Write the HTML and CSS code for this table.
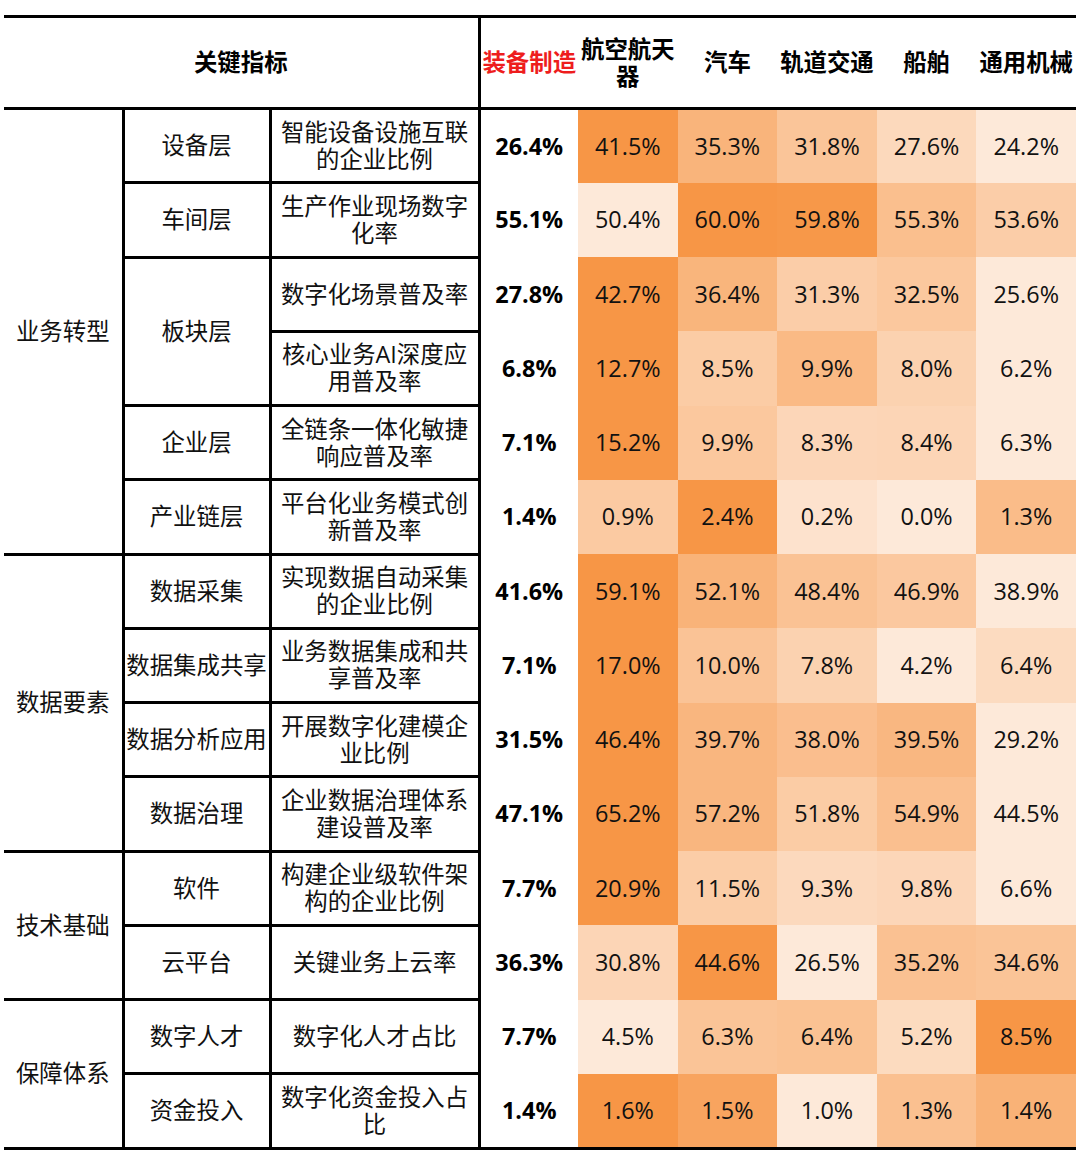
FILE: index.html
```html
<!DOCTYPE html>
<html lang="zh-CN">
<head>
<meta charset="utf-8">
<title>关键指标</title>
<link rel="stylesheet" href="styles.css">
</head>
<body>
<table class="kpi">
  <colgroup>
    <col class="c-grp"><col class="c-sub"><col class="c-ind"><col class="c-tot">
    <col class="c-heat"><col class="c-heat"><col class="c-heat"><col class="c-heat"><col class="c-heat">
  </colgroup>
  <thead>
    <tr class="head">
      <th colspan="3" class="h-main">关键指标</th>
      <th class="h-red">装备制造</th>
      <th>航空航天<br>器</th>
      <th>汽车</th>
      <th>轨道交通</th>
      <th>船舶</th>
      <th>通用机械</th>
    </tr>
  </thead>
  <tbody>
    <tr>
      <td rowspan="6" class="grp">业务转型</td>
      <td class="sub">设备层</td>
      <td class="ind">智能设备设施互联<br>的企业比例</td>
      <td class="tot">26.4%</td>
      <td class="heat" style="background:rgb(247,150,70)">41.5%</td>
      <td class="heat" style="background:rgb(249,180,123)">35.3%</td>
      <td class="heat" style="background:rgb(250,197,153)">31.8%</td>
      <td class="heat" style="background:rgb(252,217,188)">27.6%</td>
      <td class="heat" style="background:rgb(253,233,217)">24.2%</td>
    </tr>
    <tr>
      <td class="sub">车间层</td>
      <td class="ind">生产作业现场数字<br>化率</td>
      <td class="tot">55.1%</td>
      <td class="heat" style="background:rgb(253,233,217)">50.4%</td>
      <td class="heat" style="background:rgb(247,150,70)">60.0%</td>
      <td class="heat" style="background:rgb(247,152,73)">59.8%</td>
      <td class="heat" style="background:rgb(250,191,142)">55.3%</td>
      <td class="heat" style="background:rgb(251,205,168)">53.6%</td>
    </tr>
    <tr>
      <td rowspan="2" class="sub">板块层</td>
      <td class="ind">数字化场景普及率</td>
      <td class="tot">27.8%</td>
      <td class="heat" style="background:rgb(247,150,70)">42.7%</td>
      <td class="heat" style="background:rgb(249,181,124)">36.4%</td>
      <td class="heat" style="background:rgb(251,205,168)">31.3%</td>
      <td class="heat" style="background:rgb(251,200,158)">32.5%</td>
      <td class="heat" style="background:rgb(253,233,217)">25.6%</td>
    </tr>
    <tr>
      <td class="ind">核心业务AI深度应<br>用普及率</td>
      <td class="tot">6.8%</td>
      <td class="heat" style="background:rgb(247,150,70)">12.7%</td>
      <td class="heat" style="background:rgb(251,204,165)">8.5%</td>
      <td class="heat" style="background:rgb(250,186,133)">9.9%</td>
      <td class="heat" style="background:rgb(251,210,176)">8.0%</td>
      <td class="heat" style="background:rgb(253,233,217)">6.2%</td>
    </tr>
    <tr>
      <td class="sub">企业层</td>
      <td class="ind">全链条一体化敏捷<br>响应普及率</td>
      <td class="tot">7.1%</td>
      <td class="heat" style="background:rgb(247,150,70)">15.2%</td>
      <td class="heat" style="background:rgb(251,200,158)">9.9%</td>
      <td class="heat" style="background:rgb(252,214,184)">8.3%</td>
      <td class="heat" style="background:rgb(252,213,182)">8.4%</td>
      <td class="heat" style="background:rgb(253,233,217)">6.3%</td>
    </tr>
    <tr class="grp-end">
      <td class="sub">产业链层</td>
      <td class="ind">平台化业务模式创<br>新普及率</td>
      <td class="tot">1.4%</td>
      <td class="heat" style="background:rgb(251,202,162)">0.9%</td>
      <td class="heat" style="background:rgb(247,150,70)">2.4%</td>
      <td class="heat" style="background:rgb(253,226,205)">0.2%</td>
      <td class="heat" style="background:rgb(253,233,217)">0.0%</td>
      <td class="heat" style="background:rgb(250,188,137)">1.3%</td>
    </tr>
    <tr>
      <td rowspan="4" class="grp">数据要素</td>
      <td class="sub">数据采集</td>
      <td class="ind">实现数据自动采集<br>的企业比例</td>
      <td class="tot">41.6%</td>
      <td class="heat" style="background:rgb(247,150,70)">59.1%</td>
      <td class="heat" style="background:rgb(249,179,121)">52.1%</td>
      <td class="heat" style="background:rgb(250,194,148)">48.4%</td>
      <td class="heat" style="background:rgb(251,200,159)">46.9%</td>
      <td class="heat" style="background:rgb(253,233,217)">38.9%</td>
    </tr>
    <tr>
      <td class="sub">数据集成共享</td>
      <td class="ind">业务数据集成和共<br>享普及率</td>
      <td class="tot">7.1%</td>
      <td class="heat" style="background:rgb(247,150,70)">17.0%</td>
      <td class="heat" style="background:rgb(250,195,150)">10.0%</td>
      <td class="heat" style="background:rgb(251,210,176)">7.8%</td>
      <td class="heat" style="background:rgb(253,233,217)">4.2%</td>
      <td class="heat" style="background:rgb(252,219,192)">6.4%</td>
    </tr>
    <tr>
      <td class="sub">数据分析应用</td>
      <td class="ind">开展数字化建模企<br>业比例</td>
      <td class="tot">31.5%</td>
      <td class="heat" style="background:rgb(247,150,70)">46.4%</td>
      <td class="heat" style="background:rgb(249,182,127)">39.7%</td>
      <td class="heat" style="background:rgb(250,190,142)">38.0%</td>
      <td class="heat" style="background:rgb(249,183,129)">39.5%</td>
      <td class="heat" style="background:rgb(253,233,217)">29.2%</td>
    </tr>
    <tr>
      <td class="sub">数据治理</td>
      <td class="ind">企业数据治理体系<br>建设普及率</td>
      <td class="tot">47.1%</td>
      <td class="heat" style="background:rgb(247,150,70)">65.2%</td>
      <td class="heat" style="background:rgb(249,182,127)">57.2%</td>
      <td class="heat" style="background:rgb(251,204,165)">51.8%</td>
      <td class="heat" style="background:rgb(250,191,143)">54.9%</td>
      <td class="heat" style="background:rgb(253,233,217)">44.5%</td>
    </tr>
    <tr>
      <td rowspan="2" class="grp">技术基础</td>
      <td class="sub">软件</td>
      <td class="ind">构建企业级软件架<br>构的企业比例</td>
      <td class="tot">7.7%</td>
      <td class="heat" style="background:rgb(247,150,70)">20.9%</td>
      <td class="heat" style="background:rgb(251,205,167)">11.5%</td>
      <td class="heat" style="background:rgb(252,217,189)">9.3%</td>
      <td class="heat" style="background:rgb(252,214,184)">9.8%</td>
      <td class="heat" style="background:rgb(253,233,217)">6.6%</td>
    </tr>
    <tr>
      <td class="sub">云平台</td>
      <td class="ind">关键业务上云率</td>
      <td class="tot">36.3%</td>
      <td class="heat" style="background:rgb(252,213,182)">30.8%</td>
      <td class="heat" style="background:rgb(247,150,70)">44.6%</td>
      <td class="heat" style="background:rgb(253,233,217)">26.5%</td>
      <td class="heat" style="background:rgb(250,193,146)">35.2%</td>
      <td class="heat" style="background:rgb(250,196,151)">34.6%</td>
    </tr>
    <tr>
      <td rowspan="2" class="grp">保障体系</td>
      <td class="sub">数字人才</td>
      <td class="ind">数字化人才占比</td>
      <td class="tot">7.7%</td>
      <td class="heat" style="background:rgb(253,233,217)">4.5%</td>
      <td class="heat" style="background:rgb(250,196,151)">6.3%</td>
      <td class="heat" style="background:rgb(250,194,147)">6.4%</td>
      <td class="heat" style="background:rgb(252,219,191)">5.2%</td>
      <td class="heat" style="background:rgb(247,150,70)">8.5%</td>
    </tr>
    <tr>
      <td class="sub">资金投入</td>
      <td class="ind">数字化资金投入占<br>比</td>
      <td class="tot">1.4%</td>
      <td class="heat" style="background:rgb(247,150,70)">1.6%</td>
      <td class="heat" style="background:rgb(248,164,95)">1.5%</td>
      <td class="heat" style="background:rgb(253,233,217)">1.0%</td>
      <td class="heat" style="background:rgb(250,192,144)">1.3%</td>
      <td class="heat" style="background:rgb(249,178,119)">1.4%</td>
    </tr>
  </tbody>
</table>
</body>
</html>
```
FILE: styles.css
```css
html, body {
  margin: 0;
  padding: 0;
  background: #ffffff;
}

body {
  font-family: "Open Sans", "Noto Sans CJK SC", sans-serif;
  color: #111111;
}

.kpi {
  border-collapse: collapse;
  table-layout: fixed;
  width: 1072px;
  margin: 15px 4px 0 4px;
  border-top: 3px solid #000;
  border-bottom: 3px solid #000;
  font-size: 23.4px;
  line-height: 27px;
}

.c-grp { width: 119px; }
.c-sub { width: 147px; }
.c-ind { width: 209px; }
.c-tot { width: 99px; }
.c-heat { width: 99.6px; }

.kpi th,
.kpi td {
  padding: 0;
  text-align: center;
  vertical-align: middle;
  white-space: nowrap;
}

.head {
  height: 92px;
}

.head th {
  font-weight: 700;
  color: #000;
  border-bottom: 3px solid #000;
}

.head .h-main {
  border-right: 3px solid #000;
}

.head .h-red {
  color: #ee1d1d;
}

.kpi tbody tr {
  height: 74.25px;
}

.grp {
  border-right: 3px solid #000;
  border-bottom: 3px solid #000;
}

.sub {
  border-right: 3px solid #000;
  border-bottom: 3px solid #000;
}

.ind {
  border-right: 3px solid #000;
  border-bottom: 3px solid #000;
}

.tot {
  font-weight: 700;
  color: #000;
}

.heat {
  color: #111;
}
```
